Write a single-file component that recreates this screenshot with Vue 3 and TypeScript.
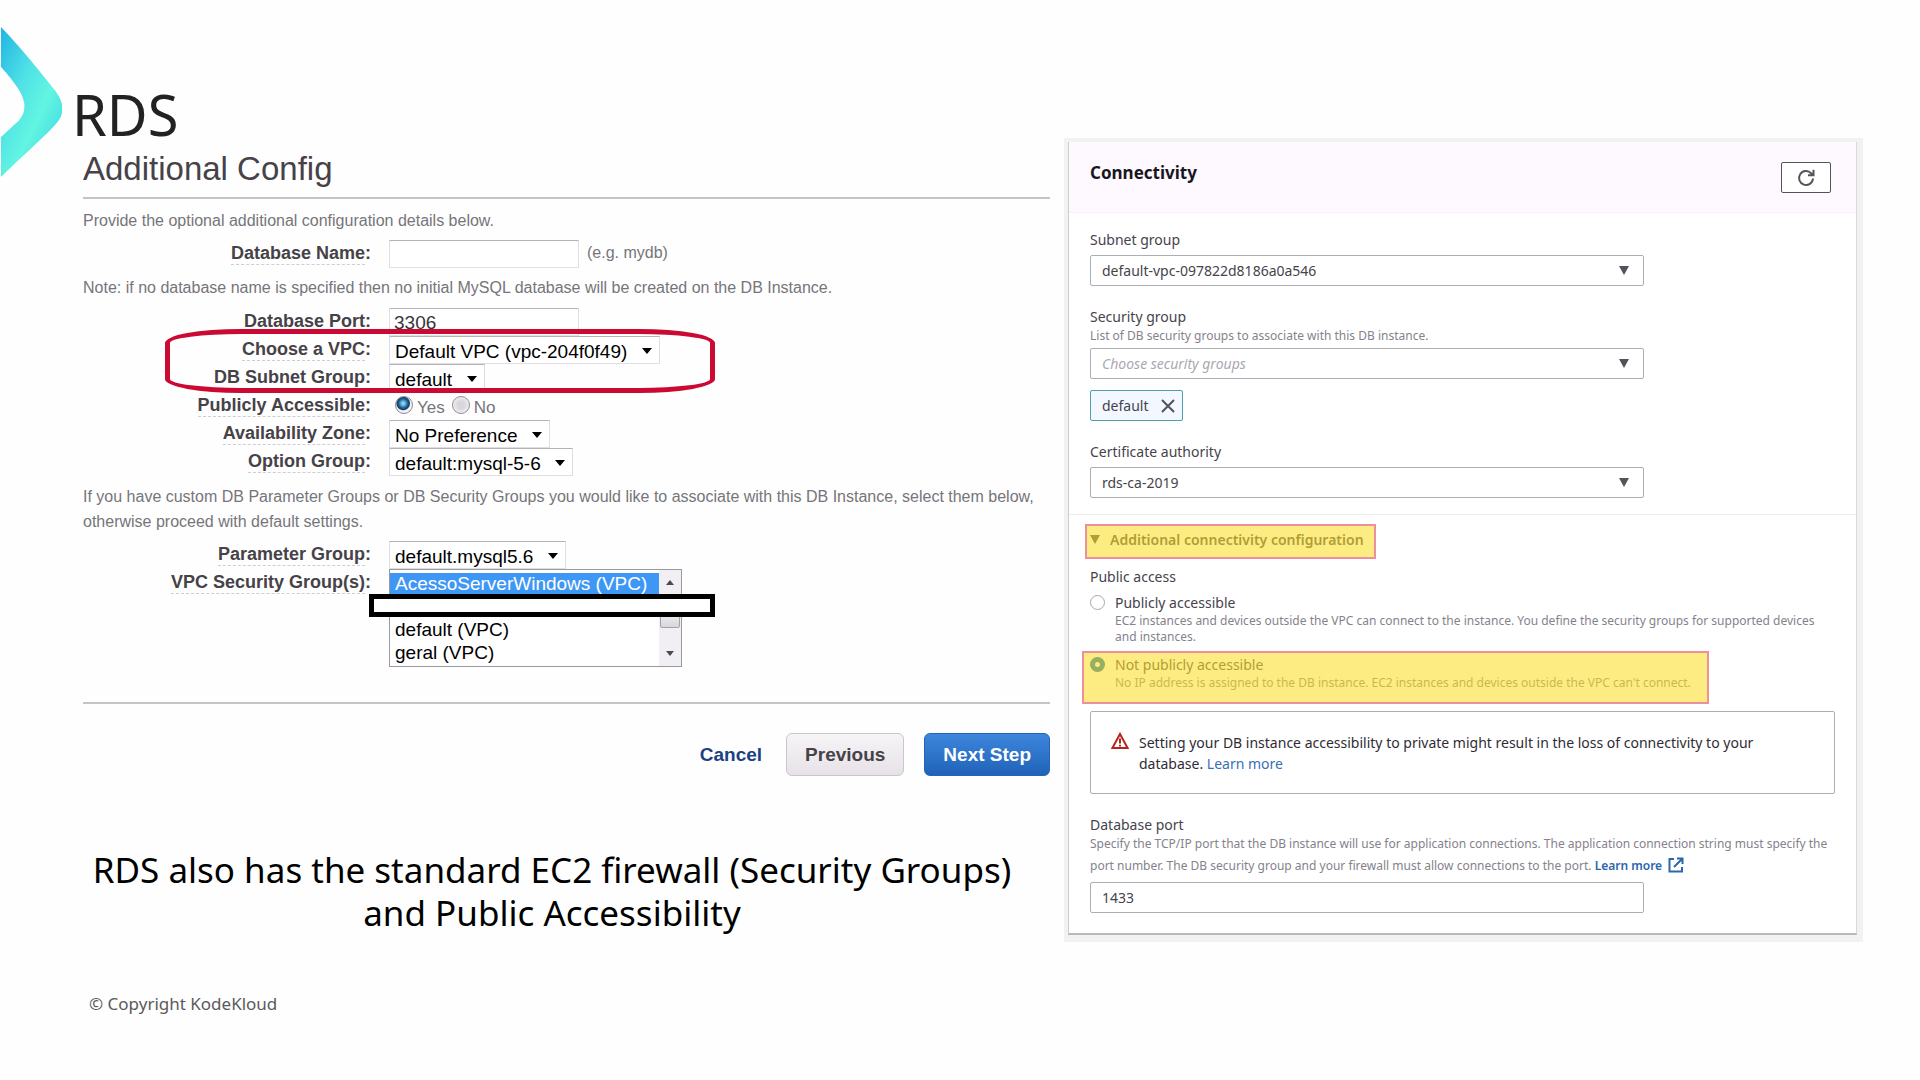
<script setup lang="ts">
import { ref } from 'vue'

const dbName = ref('')
const mysqlPort = ref('3306')
const vpc = ref('Default VPC (vpc-204f0f49)')
const subnetGroup = ref('default')
const isPublic = ref('yes')
const zone = ref('No Preference')
const optionGroup = ref('default:mysql-5-6')
const parameterGroup = ref('default.mysql5.6')
const vpcSecurityGroups = ref(['AcessoServerWindows (VPC)'])

const rdsSubnetGroup = ref('default-vpc-097822d8186a0a546')
const rdsSecurityGroup = ref('')
const certificate = ref('rds-ca-2019')
const access = ref('private')
const rdsPort = ref('1433')
</script>

<template>
  <main class="slide">
    <header class="slide-head">
      <svg class="chevron" viewBox="0 0 62 150" aria-hidden="true">
        <defs>
          <linearGradient id="chevron-fill" x1="0" y1="0" x2="0.7" y2="0.8">
            <stop offset="0" stop-color="#1fb4e4" />
            <stop offset="0.45" stop-color="#4ee0e6" />
            <stop offset="0.8" stop-color="#62f5e2" />
            <stop offset="1" stop-color="#50e6e2" />
          </linearGradient>
        </defs>
        <path
          fill="url(#chevron-fill)"
          d="M1 0 C14 13 40 44 53 61 Q71 82 55 98 C40 114 18 133 1 150 V110 L14 98 Q32 84 19 63 Q12 52 1 40 Z"
        />
      </svg>
      <h1>RDS</h1>
    </header>

    <div class="panels">
      <section class="left">
        <form class="wizard" @submit.prevent>
          <h2>Additional Config</h2>
          <p class="intro">Provide the optional additional configuration details below.</p>

          <div class="row">
            <label class="name" for="db-name"><span>Database Name</span>:</label>
            <input id="db-name" v-model="dbName" class="box" type="text" />
            <span class="hint">(e.g. mydb)</span>
          </div>

          <p class="note">
            Note: if no database name is specified then no initial MySQL database will be created on the DB
            Instance.
          </p>

          <div class="row">
            <label class="name plain" for="mysql-port"><span>Database Port</span>:</label>
            <input id="mysql-port" v-model="mysqlPort" class="box" type="text" />
          </div>

          <div class="circled">
            <div class="row">
              <label class="name" for="vpc"><span>Choose a VPC</span>:</label>
              <div class="drop">
                <select id="vpc" v-model="vpc">
                  <option>Default VPC (vpc-204f0f49)</option>
                </select>
                <svg viewBox="0 0 10 6" aria-hidden="true"><path d="M0 0h10L5 6z" /></svg>
              </div>
            </div>
            <div class="row">
              <label class="name plain" for="subnet"><span>DB Subnet Group</span>:</label>
              <div class="drop">
                <select id="subnet" v-model="subnetGroup">
                  <option>default</option>
                </select>
                <svg viewBox="0 0 10 6" aria-hidden="true"><path d="M0 0h10L5 6z" /></svg>
              </div>
            </div>
          </div>

          <div class="row" role="radiogroup" aria-labelledby="public-label">
            <span id="public-label" class="name"><span>Publicly Accessible</span>:</span>
            <div class="radios">
              <input id="public-yes" v-model="isPublic" type="radio" name="public" value="yes" />
              <label for="public-yes">Yes</label>
              <input id="public-no" v-model="isPublic" type="radio" name="public" value="no" />
              <label for="public-no">No</label>
            </div>
          </div>

          <div class="row">
            <label class="name" for="zone"><span>Availability Zone</span>:</label>
            <div class="drop">
              <select id="zone" v-model="zone">
                <option>No Preference</option>
              </select>
              <svg viewBox="0 0 10 6" aria-hidden="true"><path d="M0 0h10L5 6z" /></svg>
            </div>
          </div>

          <div class="row">
            <label class="name" for="option-group"><span>Option Group</span>:</label>
            <div class="drop">
              <select id="option-group" v-model="optionGroup">
                <option>default:mysql-5-6</option>
              </select>
              <svg viewBox="0 0 10 6" aria-hidden="true"><path d="M0 0h10L5 6z" /></svg>
            </div>
          </div>

          <p class="custom">
            If you have custom DB Parameter Groups or DB Security Groups you would like to associate with this
            DB Instance, select them below, otherwise proceed with default settings.
          </p>

          <div class="row">
            <label class="name" for="parameter-group"><span>Parameter Group</span>:</label>
            <div class="drop">
              <select id="parameter-group" v-model="parameterGroup">
                <option>default.mysql5.6</option>
              </select>
              <svg viewBox="0 0 10 6" aria-hidden="true"><path d="M0 0h10L5 6z" /></svg>
            </div>
          </div>

          <div class="row list-row">
            <label class="name" for="vpc-groups"><span>VPC Security Group(s)</span>:</label>
            <div class="list">
              <select id="vpc-groups" v-model="vpcSecurityGroups" multiple size="4">
                <option>AcessoServerWindows (VPC)</option>
                <option value="hidden" aria-label="hidden"></option>
                <option>default (VPC)</option>
                <option>geral (VPC)</option>
              </select>
              <div class="track" aria-hidden="true">
                <svg viewBox="0 0 10 6"><path d="M0 6h10L5 0z" /></svg>
                <i class="thumb"></i>
                <svg viewBox="0 0 10 6"><path d="M0 0h10L5 6z" /></svg>
              </div>
              <div class="redaction"></div>
            </div>
          </div>

          <footer class="actions">
            <a href="#">Cancel</a>
            <button type="button" class="previous">Previous</button>
            <button type="submit" class="next">Next Step</button>
          </footer>
        </form>

        <p class="caption">
          RDS also has the standard EC2 firewall (Security Groups)<br />and Public Accessibility
        </p>
      </section>

      <section class="frame">
        <div class="card">
          <header class="card-head">
            <h2>Connectivity</h2>
            <button type="button" class="refresh" aria-label="Refresh">
              <svg viewBox="0 0 18 18" aria-hidden="true">
                <path d="M16 9.5A7 7 0 1 1 14.2 4.3L16 6M16.5 0.8V6.3H11" />
              </svg>
            </button>
          </header>

          <div class="card-body">
            <div class="field">
              <label for="rds-subnet">Subnet group</label>
              <div class="combo">
                <select id="rds-subnet" v-model="rdsSubnetGroup">
                  <option>default-vpc-097822d8186a0a546</option>
                </select>
                <svg viewBox="0 0 10 9" aria-hidden="true"><path d="M0 0h10L5 9z" /></svg>
              </div>
            </div>

            <div class="field described">
              <label for="rds-security">Security group</label>
              <p class="desc">List of DB security groups to associate with this DB instance.</p>
              <div class="combo placeholder">
                <select id="rds-security" v-model="rdsSecurityGroup">
                  <option value="">Choose security groups</option>
                </select>
                <svg viewBox="0 0 10 9" aria-hidden="true"><path d="M0 0h10L5 9z" /></svg>
              </div>
              <div class="tag">
                <span>default</span>
                <button type="button" aria-label="Remove default">
                  <svg viewBox="0 0 14 14" aria-hidden="true"><path d="M1 1l12 12M13 1L1 13" /></svg>
                </button>
              </div>
            </div>

            <div class="field">
              <label for="certificate">Certificate authority</label>
              <div class="combo">
                <select id="certificate" v-model="certificate">
                  <option>rds-ca-2019</option>
                </select>
                <svg viewBox="0 0 10 9" aria-hidden="true"><path d="M0 0h10L5 9z" /></svg>
              </div>
            </div>
          </div>

          <div class="extra">
            <button type="button" class="toggle" aria-expanded="true">
              <svg viewBox="0 0 10 9" aria-hidden="true"><path d="M0 0h10L5 9z" /></svg>
              Additional connectivity configuration
            </button>

            <div role="radiogroup" aria-labelledby="access-label">
              <p id="access-label" class="group-label">Public access</p>
              <div class="choice">
                <input id="access-public" v-model="access" type="radio" name="access" value="public" />
                <div>
                  <label for="access-public">Publicly accessible</label>
                  <p>
                    EC2 instances and devices outside the VPC can connect to the instance. You define the
                    security groups for supported devices and instances.
                  </p>
                </div>
              </div>
              <div class="choice marked">
                <input id="access-private" v-model="access" type="radio" name="access" value="private" />
                <div>
                  <label for="access-private">Not publicly accessible</label>
                  <p>
                    No IP address is assigned to the DB instance. EC2 instances and devices outside the VPC
                    can't connect.
                  </p>
                </div>
              </div>
            </div>

            <div class="alert" role="note">
              <svg viewBox="0 0 18 18" aria-hidden="true">
                <path class="outline" d="M9 2L16.6 16H1.4Z" />
                <path class="mark" d="M9 6.5V11.5M9 12.8V14.5" />
              </svg>
              <p>
                Setting your DB instance accessibility to private might result in the loss of connectivity to
                your database. <a href="#">Learn more</a>
              </p>
            </div>

            <div class="field">
              <label for="rds-port">Database port</label>
              <p class="desc tall">
                Specify the TCP/IP port that the DB instance will use for application connections. The
                application connection string must specify the port number. The DB security group and your
                firewall must allow connections to the port.
                <a href="#">Learn more<svg viewBox="0 0 16 16" aria-hidden="true">
                    <path d="M6 2H1.5V14.5H14V10M9 1.5H14.5V7M14.5 1.5L6 10" /></svg></a>
              </p>
              <input id="rds-port" v-model="rdsPort" class="port" type="text" />
            </div>
          </div>
        </div>
      </section>
    </div>

    <footer class="copyright">© Copyright KodeKloud</footer>
  </main>
</template>

<style>
body {
  margin: 0;
  background: #fefefe;
}
</style>

<style scoped>
.slide,
.slide *,
.slide *::after {
  box-sizing: border-box;
}

.slide {
  font-family: 'Noto Sans', 'Open Sans', sans-serif;
  color: #000;
}

h1,
h2,
p {
  margin: 0;
  font-weight: 400;
}

input,
select,
button {
  margin: 0;
  font: inherit;
  color: inherit;
}

select {
  appearance: none;
  border: 0;
  background: transparent;
}

a {
  text-decoration: none;
}

.slide-head {
  position: relative;
  height: 138px;
  padding: 90px 0 0 72px;
}

.slide-head h1 {
  font-size: 56px;
  line-height: 48px;
  color: #222;
}

.chevron {
  position: absolute;
  left: 0;
  top: 27px;
  width: 62px;
  height: 150px;
}

.panels {
  display: grid;
  grid-template-columns: minmax(0, 967fr) minmax(0, 799fr);
  gap: 14px;
  align-items: start;
  padding: 0 57px 0 83px;
}

/* Old-style launch wizard */
.wizard {
  font-family: 'Liberation Sans', Arial, sans-serif;
  font-size: 16px;
  color: #76757a;
}

.wizard h2 {
  padding-top: 2px;
  border-bottom: 2px solid #c4c4c4;
  font-size: 33px;
  line-height: 57px;
  color: #464248;
}

.intro {
  padding-top: 3px;
  line-height: 38px;
}

.note {
  line-height: 40px;
}

.custom {
  padding: 8px 0 7px;
  line-height: 25px;
}

.row {
  display: flex;
  align-items: flex-start;
  gap: 18px;
  height: 28px;
}

.name {
  flex: 0 0 288px;
  padding-top: 2px;
  font-size: 18px;
  font-weight: 700;
  line-height: 22px;
  text-align: right;
  color: #464248;
}

.name span {
  display: inline-block;
  border-bottom: 1px dashed #cfcdd2;
}

.name.plain span {
  border-color: transparent;
}

.box {
  width: 190px;
  height: 28px;
  padding: 2px 4px 0;
  border: 1px solid #e2dfe4;
  border-top-color: #b4b2b6;
  background: #fff;
  font-size: 19px;
  color: #38343a;
}

.hint {
  margin-left: -10px;
  line-height: 26px;
}

.drop {
  position: relative;
  height: 28px;
  border: 1px solid #e0dde3;
  border-top-color: #b4b2b6;
  background: #fff;
}

.drop select {
  display: block;
  height: 27px;
  padding: 1px 31px 0 5px;
  font-size: 19px;
  color: #000;
}

.drop svg {
  position: absolute;
  right: 7px;
  top: 11px;
  width: 10px;
  height: 6px;
  pointer-events: none;
}

.circled {
  position: relative;
}

.circled::after {
  content: '';
  position: absolute;
  inset: -7px auto auto 82px;
  width: 550px;
  height: 64px;
  border: 5px solid #cb0a33;
  border-radius: 76px / 14px;
  pointer-events: none;
}

.radios {
  display: flex;
  align-items: center;
  gap: 4px;
  height: 28px;
  padding-left: 6px;
  font-size: 17px;
}

.radios input {
  appearance: none;
  width: 18px;
  height: 18px;
  margin-bottom: 2px;
  border: 1px solid #8f8d93;
  border-radius: 50%;
  background: radial-gradient(circle, #d8d6da 30%, #f5f3f6 80%);
}

.radios input:checked {
  background: radial-gradient(circle at 45% 40%, #7fd0f0 0 10%, #1c5f90 35%, #143f66 48%, #f3f1f5 56%);
}

.radios label {
  padding-top: 4px;
}

.radios label + input {
  margin-left: 3px;
}

.list-row {
  height: 98px;
}

.list {
  position: relative;
  display: flex;
  width: 293px;
  height: 98px;
  border: 1px solid #9b999e;
  background: #fff;
}

.list select {
  flex: 1;
  height: 96px;
  padding: 3px 0 0;
  overflow: hidden;
  outline: 0;
  font-size: 19px;
  color: #000;
}

.list option {
  height: 23px;
  min-height: 23px;
  padding: 0 5px;
  line-height: 23px;
}

.list option:checked {
  background: #3f97f5 linear-gradient(#3f97f5, #3f97f5);
  color: #fff;
}

.track {
  display: flex;
  flex-direction: column;
  align-items: center;
  justify-content: space-between;
  width: 22px;
  padding: 10px 0;
  background: #f1eff3;
  fill: #4c4a4f;
}

.track svg {
  width: 8px;
  height: 5px;
}

.thumb {
  width: 20px;
  height: 20px;
  border: 1px solid #a5a3a8;
  border-radius: 2px;
  background: linear-gradient(#f7f6f8, #d8d6db);
}

.redaction {
  position: absolute;
  left: -21px;
  right: -34px;
  top: 24px;
  height: 23px;
  border: 5px solid #000;
  background: #fff;
}

.actions {
  display: flex;
  align-items: center;
  justify-content: flex-end;
  gap: 20px;
  margin-top: 35px;
  padding-top: 29px;
  border-top: 2px solid #c4c4c4;
  font-size: 19px;
  font-weight: 700;
}

.actions a {
  margin-right: 4px;
  color: #1c4183;
}

.actions button {
  height: 43px;
  padding: 0 18px;
  border: 1px solid #c9c6cc;
  border-radius: 6px;
}

.previous {
  background: linear-gradient(#f7f4f8, #e6e2e7);
  color: #464248;
}

.actions .next {
  border-color: #2465b4;
  background: linear-gradient(#3d86dc, #1f63b8);
  color: #fff;
}

.caption {
  padding: 72px 29px 0 0;
  font-size: 35px;
  line-height: 43px;
  text-align: center;
  white-space: nowrap;
}

/* New-style console card */
.frame {
  padding: 4px 6px 7px 4px;
  background: #f2f2f3;
}

.card {
  border-left: 1px solid #cdcdcf;
  border-right: 1px solid #d9d9db;
  border-bottom: 2px solid #b9b9bc;
  background: #fff;
  font-size: 14px;
  color: #46434c;
}

.card-head {
  display: flex;
  align-items: flex-start;
  justify-content: space-between;
  height: 71px;
  padding: 20px 25px 0 21px;
  border-bottom: 1px solid #f4f0f6;
  background: #fdf9ff;
}

.card-head h2 {
  font-size: 17px;
  font-weight: 700;
  line-height: 21px;
  color: #19161f;
}

.refresh {
  display: grid;
  place-items: center;
  width: 50px;
  height: 31px;
  padding: 0;
  border: 1px solid #54525a;
  border-radius: 2px;
  background: #fff;
}

.refresh svg {
  width: 18px;
  height: 18px;
  fill: none;
  stroke: #54525a;
  stroke-width: 2;
}

.card-body {
  display: flex;
  flex-direction: column;
  gap: 21px;
  padding: 17px 21px 16px;
}

.field {
  display: flex;
  flex-direction: column;
  align-items: flex-start;
}

.field label,
.group-label,
.choice label {
  display: block;
  line-height: 20px;
}

.combo,
.port {
  width: 74.4%;
  height: 31px;
  margin-top: 5px;
  border: 1px solid #aeadb2;
  border-radius: 2px;
  background: #fff;
}

.described .combo {
  margin-top: 3px;
}

.combo {
  position: relative;
}

.combo select {
  display: block;
  width: 100%;
  height: 29px;
  padding: 0 11px;
}

.combo svg {
  position: absolute;
  right: 14px;
  top: 10px;
  width: 10px;
  height: 9px;
  fill: #54525a;
  pointer-events: none;
}

.placeholder select {
  font-style: italic;
  color: #aaa8b0;
}

.port {
  padding: 0 11px;
}

.desc {
  font-size: 12px;
  line-height: 18px;
  color: #85828c;
}

.desc.tall {
  margin-top: -2px;
  line-height: 22px;
}

.desc a {
  font-weight: 600;
  color: #2c66ac;
}

.desc svg {
  width: 16px;
  height: 16px;
  margin-left: 6px;
  vertical-align: -3px;
  fill: none;
  stroke: currentColor;
  stroke-width: 2;
}

.tag {
  display: flex;
  align-items: center;
  gap: 12px;
  height: 31px;
  margin-top: 11px;
  padding: 0 7px 0 11px;
  border: 1px solid #4d9fb0;
  border-radius: 2px;
  background: #f3f7ff;
}

.tag button {
  display: flex;
  padding: 0;
  border: 0;
  background: transparent;
}

.tag svg {
  width: 14px;
  height: 14px;
  fill: none;
  stroke: #54525a;
  stroke-width: 2;
}

.extra {
  padding: 9px 21px 20px;
  border-top: 1px solid #ececee;
}

.toggle {
  position: relative;
  display: flex;
  align-items: center;
  gap: 10px;
  height: 35px;
  margin-left: -5px;
  padding: 0 12px 4px 5px;
  border: 0;
  background: transparent;
  font-weight: 600;
}

.toggle svg {
  width: 10px;
  height: 9px;
  fill: #46434c;
}

/* Translucent marker boxes over the highlighted controls */
.toggle::after,
.marked::after {
  content: '';
  position: absolute;
  inset: 0;
  border: 2px solid rgba(222, 70, 90, 0.6);
  background: rgba(252, 222, 40, 0.58);
  background-clip: padding-box;
  pointer-events: none;
}

.group-label {
  margin: 8px 0 6px;
}

.choice {
  position: relative;
  display: flex;
  gap: 10px;
}

.choice input {
  appearance: none;
  flex: none;
  width: 15px;
  height: 15px;
  margin-top: 2px;
  border: 1px solid #a9a7ad;
  border-radius: 50%;
  background: #fff;
}

.choice input:checked {
  border: 5px solid #0a6fb0;
}

.choice p {
  font-size: 12px;
  line-height: 16px;
  color: #85828c;
}

.marked {
  width: fit-content;
  margin-top: 10px;
}

.marked::after {
  inset: -4px -18px -13px -8px;
}

.alert {
  display: flex;
  gap: 10px;
  margin: 20px 0 21px;
  padding: 20px 60px 19px 20px;
  border: 1px solid #aeadb2;
  border-radius: 2px;
  line-height: 21px;
  color: #2f2c35;
}

.alert svg {
  flex: none;
  width: 18px;
  height: 18px;
  fill: none;
}

.outline {
  stroke: #b3261e;
  stroke-width: 2;
}

.mark {
  stroke: #b3261e;
  stroke-width: 2;
}

.alert a {
  color: #3a6fb4;
}

.copyright {
  padding: 50px 0 0 89px;
  font-size: 17px;
  line-height: 24px;
  color: #5a5a5a;
}
</style>
